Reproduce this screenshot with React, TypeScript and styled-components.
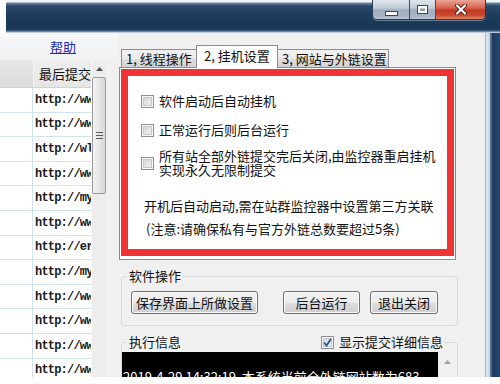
import React from "react";
import styled, { createGlobalStyle } from "styled-components";

const GlobalStyle = createGlobalStyle`
  html, body { margin: 0; padding: 0; background: #fff; }
  body { font-family: "Noto Sans CJK SC", "Noto Sans", sans-serif; color: #111; }
`;

const Screen = styled.div`
  width: 500px;
  height: 384px;
  overflow: hidden;
  background: #fff;
  display: flex;
  flex-direction: column;
`;

const TitleBar = styled.div`
  height: 33px;
  flex: none;
  display: flex;
  justify-content: flex-end;
  align-items: flex-start;
  padding-right: 14px;
  background:
    linear-gradient(90deg, #fff 0 6px, transparent 6px),
    linear-gradient(180deg, #f2f4f7 0 2px, #6c87a3 3px, #2b4969 6px, #1d3b5c 16px, #1a3657 29px, #3b5a7a 31px, #9fb4c9 32px, #dbe4ee 33px);
`;

const CaptionButtons = styled.div`
  display: flex;
  height: 19px;
  border: 1px solid #2a3a50;
  border-top: none;
  border-radius: 0 0 5px 5px;
  overflow: hidden;
  box-shadow: 0 1px 0 rgba(255, 255, 255, 0.35);
`;

const CaptionButton = styled.div<{ $w: number; $close?: boolean }>`
  width: ${(p) => p.$w}px;
  display: flex;
  align-items: center;
  justify-content: center;
  background: ${(p) =>
    p.$close
      ? "linear-gradient(#eaa597, #d86550 40%, #c23a22 55%, #c94a30 80%, #e08669)"
      : "linear-gradient(#e2e7ee, #c3ccd8 40%, #9fadbf 55%, #a6b4c6 85%, #b9c6d5)"};
  & + & {
    border-left: 1px solid #3c4d64;
  }
`;

const Body = styled.div`
  height: 344px;
  flex: none;
  display: flex;
  background: #f0f0f0;
`;

const BottomStrip = styled.div`
  flex: 1;
  background: #fff;
`;

const LeftPane = styled.div`
  width: 118px;
  flex: none;
  display: flex;
  flex-direction: column;
`;

const HelpBar = styled.div`
  height: 27px;
  flex: none;
  padding-left: 50px;
  display: flex;
  align-items: center;
  background: linear-gradient(#f7f8fa, #eff1f3);
`;

const HelpLink = styled.a`
  font-size: 13px;
  line-height: 15px;
  color: #1f2ab4;
  text-decoration: underline;
`;

const GridArea = styled.div`
  flex: 1;
  min-height: 0;
  display: flex;
`;

const Table = styled.div`
  width: 91px;
  flex: none;
  background: #fff;
  overflow: hidden;
`;

const HeaderRow = styled.div`
  height: 28px;
  box-sizing: border-box;
  display: flex;
  border-bottom: 1px solid #d2d2d2;
`;

const HeaderCell = styled.div<{ $first?: boolean }>`
  ${(p) => (p.$first ? "width: 33px; flex: none; border-right: 1px solid #f4f4f4; background: linear-gradient(#e6e6e6, #dcdcdc);" : "flex: 1; background: linear-gradient(#eeeeee, #e6e6e6);")}
  font-size: 13px;
  display: flex;
  align-items: center;
  padding-left: ${(p) => (p.$first ? 0 : 5)}px;
  white-space: nowrap;
  overflow: hidden;
`;

const Row = styled.div`
  height: 24.6px;
  box-sizing: border-box;
  display: flex;
  border-bottom: 1px solid #cfe4ee;
`;

const IndexCell = styled.div`
  width: 33px;
  flex: none;
  box-sizing: border-box;
  border-right: 1px solid #cfe4ee;
`;

const UrlCell = styled.div`
  flex: 1;
  padding-left: 2px;
  display: flex;
  align-items: center;
  font-family: "Liberation Mono", monospace;
  font-weight: bold;
  font-size: 12px;
  letter-spacing: -0.8px;
  color: #1a1a1a;
  white-space: nowrap;
  overflow: hidden;
`;

const ScrollBar = styled.div`
  width: 15px;
  flex: none;
  display: flex;
  flex-direction: column;
  align-items: stretch;
  background: #ededed;
  border-left: 1px solid #fafafa;
  box-sizing: border-box;
`;

const ScrollArrow = styled.div<{ $h: number }>`
  height: ${(p) => p.$h}px;
  flex: none;
  display: flex;
  align-items: center;
  justify-content: center;
`;

const ScrollThumb = styled.div`
  height: 115px;
  flex: none;
  border: 1px solid #9c9c9c;
  border-radius: 2px;
  background: linear-gradient(90deg, #f3f3f3, #e7e7e7 50%, #d6d6d6);
  display: flex;
  flex-direction: column;
  align-items: center;
  justify-content: center;
  gap: 2px;
`;

const Grip = styled.span`
  width: 7px;
  height: 1px;
  background: #5a5a5a;
`;

const Splitter = styled.div`
  width: 12px;
  flex: none;
  background: #f0f0f0;
`;

const RightPane = styled.div`
  width: 367px;
  flex: none;
  display: flex;
  flex-direction: column;
  padding-top: 13px;
  box-sizing: border-box;
`;

const TabStrip = styled.div`
  height: 22px;
  flex: none;
  display: flex;
  align-items: flex-end;
  padding-left: 3px;
  margin-bottom: -1px;
  position: relative;
  z-index: 1;
`;

const Tab = styled.div<{ $active?: boolean; $w: number }>`
  width: ${(p) => p.$w}px;
  height: ${(p) => (p.$active ? 23 : 19)}px;
  box-sizing: border-box;
  border: 1px solid #898c95;
  border-bottom: ${(p) => (p.$active ? "none" : "1px solid #898c95")};
  background: ${(p) => (p.$active ? "#fcfcfc" : "linear-gradient(#f2f2f2, #ebebeb 50%, #dedede 51%, #d3d3d3)")};
  font-size: 13px;
  line-height: 16px;
  display: flex;
  align-items: center;
  padding: ${(p) => (p.$active ? "0 0 3px 7px" : "0 0 0 4px")};
  white-space: pre;
  & + & {
    margin-left: -1px;
  }
`;

const TabPanel = styled.div`
  width: 337px;
  height: 193px;
  margin-left: 1px;
  flex: none;
  box-sizing: border-box;
  border: 1px solid #898c95;
  background: #fff;
  padding: 1px 1px 3px 1px;
`;

const Highlight = styled.div`
  height: 100%;
  box-sizing: border-box;
  border: 7px solid #ee3434;
  background: #fff;
  padding: 17px 0 0 13px;
  display: flex;
  flex-direction: column;
`;

const CheckRow = styled.div<{ $top: number }>`
  display: flex;
  align-items: center;
  gap: 5px;
  margin-top: ${(p) => p.$top}px;
`;

const CheckBox = styled.span<{ $checked?: boolean }>`
  width: 13px;
  height: 13px;
  flex: none;
  box-sizing: border-box;
  border: 1px solid #8e8f8f;
  background: linear-gradient(135deg, #cfd2d6, #f6f6f6);
  box-shadow: inset 0 0 0 1px #f7f7f7, inset 0 0 0 2px #c3c7cc;
  display: flex;
  align-items: center;
  justify-content: center;
`;

const CheckLabel = styled.span<{ $tight?: boolean }>`
  font-size: 13px;
  line-height: ${(p) => (p.$tight ? 14 : 16)}px;
  white-space: nowrap;
`;

const InfoLine = styled.div<{ $top: number; $indent: number }>`
  font-size: 13px;
  line-height: 16px;
  margin-top: ${(p) => p.$top}px;
  margin-left: ${(p) => p.$indent}px;
  white-space: nowrap;
`;

const GroupBox = styled.fieldset`
  margin: 9px 0 0 3px;
  width: 337px;
  box-sizing: border-box;
  border: 1px solid #d5dde3;
  border-radius: 3px;
  min-inline-size: 0;
  flex: none;
`;

const ActionGroup = styled(GroupBox)`
  padding: 8px 0 11px 5px;
`;

const LogGroup = styled(GroupBox)`
  padding: 3px 0 0 0;
`;

const Legend = styled.legend`
  font-size: 13px;
  line-height: 14px;
  padding: 0 2px;
  margin-left: 0;
`;

const WideLegend = styled(Legend)`
  margin-left: 5px;
  width: 314px;
  display: flex;
  justify-content: space-between;
  align-items: center;
`;

const LegendCheck = styled.span`
  display: flex;
  align-items: center;
  gap: 5px;
`;

const ButtonRow = styled.div`
  display: flex;
`;

const PushButton = styled.button<{ $w: number; $gap: number }>`
  width: ${(p) => p.$w}px;
  height: 23px;
  margin-left: ${(p) => p.$gap}px;
  padding: 0;
  box-sizing: border-box;
  border: 1px solid #707070;
  border-radius: 3px;
  background: linear-gradient(#f2f2f2, #ebebeb 50%, #dddddd 51%, #cfcfcf);
  box-shadow: inset 0 0 0 1px #fbfbfb;
  font-family: "Noto Sans CJK SC", "Noto Sans", sans-serif;
  font-size: 13px;
  line-height: 16px;
  color: #111;
`;

const LogRow = styled.div`
  display: flex;
  height: 40px;
`;

const LogBox = styled.div`
  flex: 1;
  background: #000;
  color: #fff;
  font-size: 13px;
  line-height: 16px;
  padding: 17px 0 0 1px;
  white-space: pre;
  overflow: hidden;
`;

const LogScroll = styled.div`
  width: 19px;
  flex: none;
  background: #f0f0f0;
  display: flex;
  justify-content: center;
  padding-top: 8px;
  box-sizing: border-box;
`;

const FrameEdge = styled.div`
  width: 15px;
  flex: none;
  background: linear-gradient(90deg, #a9b3bd 0 1px, #e1ecf7 1px, #b9d2ea 5px, #6d7f94 5px, #4b5c72 7px, #1f3c61 7px, #25466c 15px);
`;

const UpArrow = ({ color = "#4d4d4d" }: { color?: string }) => (
  <svg width="7" height="4" viewBox="0 0 7 4">
    <path d="M0 4 L3.5 0 L7 4 Z" fill={color} />
  </svg>
);

const urls = [
  "http://www.a",
  "http://www.b",
  "http://wl.c",
  "http://www.d",
  "http://my.e",
  "http://www.f",
  "http://er.g",
  "http://my.h",
  "http://www.i",
  "http://www.j",
  "http://www.k",
  "http://www.l",
];

export default function App() {
  return (
    <>
      <GlobalStyle />
      <Screen>
        <TitleBar>
          <CaptionButtons>
            <CaptionButton $w={36}>
              <svg width="13" height="6" viewBox="0 0 13 6" style={{ marginTop: 7 }}>
                <rect x="0.5" y="1.5" width="12" height="4" fill="#fff" stroke="#34465e" />
              </svg>
            </CaptionButton>
            <CaptionButton $w={25}>
              <svg width="11" height="9" viewBox="0 0 11 9">
                <rect x="0" y="0" width="11" height="9" fill="#34465e" />
                <rect x="1" y="1" width="9" height="7" fill="#fff" />
                <rect x="3" y="3.5" width="5" height="2.5" fill="#8e9db1" />
              </svg>
            </CaptionButton>
            <CaptionButton $w={49} $close>
              <svg width="12" height="11" viewBox="0 0 12 11">
                <path d="M2 1.5 L10 9.5 M10 1.5 L2 9.5" stroke="#5a1a10" strokeWidth="4" strokeLinecap="round" />
                <path d="M2 1.5 L10 9.5 M10 1.5 L2 9.5" stroke="#fff" strokeWidth="2.2" strokeLinecap="round" />
              </svg>
            </CaptionButton>
          </CaptionButtons>
        </TitleBar>
        <Body>
          <LeftPane>
            <HelpBar>
              <HelpLink>帮助</HelpLink>
            </HelpBar>
            <GridArea>
              <Table>
                <HeaderRow>
                  <HeaderCell $first />
                  <HeaderCell>最后提交时间</HeaderCell>
                </HeaderRow>
                {urls.map((u, i) => (
                  <Row key={i}>
                    <IndexCell />
                    <UrlCell>{u}</UrlCell>
                  </Row>
                ))}
              </Table>
              <ScrollBar>
                <ScrollArrow $h={17}>
                  <UpArrow />
                </ScrollArrow>
                <ScrollThumb>
                  <Grip />
                  <Grip />
                  <Grip />
                </ScrollThumb>
              </ScrollBar>
              <Splitter />
            </GridArea>
          </LeftPane>
          <RightPane>
            <TabStrip>
              <Tab $w={76}>1, 线程操作</Tab>
              <Tab $w={82} $active>2, 挂机设置</Tab>
              <Tab $w={112}>3, 网站与外链设置</Tab>
            </TabStrip>
            <TabPanel>
              <Highlight>
                <CheckRow $top={0}>
                  <CheckBox />
                  <CheckLabel>软件启动后自动挂机</CheckLabel>
                </CheckRow>
                <CheckRow $top={13}>
                  <CheckBox />
                  <CheckLabel>正常运行后则后台运行</CheckLabel>
                </CheckRow>
                <CheckRow $top={11}>
                  <CheckBox />
                  <CheckLabel $tight>
                    所有站全部外链提交完后关闭,由监控器重启挂机
                    <br />
                    实现永久无限制提交
                  </CheckLabel>
                </CheckRow>
                <InfoLine $top={21} $indent={3}>
                  开机后自动启动,需在站群监控器中设置第三方关联
                </InfoLine>
                <InfoLine $top={7} $indent={5}>
                  (注意:请确保私有与官方外链总数要超过5条)
                </InfoLine>
              </Highlight>
            </TabPanel>
            <ActionGroup>
              <Legend>软件操作</Legend>
              <ButtonRow>
                <PushButton $w={127} $gap={4}>保存界面上所做设置</PushButton>
                <PushButton $w={77} $gap={25}>后台运行</PushButton>
                <PushButton $w={68} $gap={10}>退出关闭</PushButton>
              </ButtonRow>
            </ActionGroup>
            <LogGroup>
              <WideLegend>
                <span>执行信息</span>
                <LegendCheck>
                  <CheckBox $checked>
                    <svg width="9" height="9" viewBox="0 0 9 9">
                      <path d="M1 4.5 L3.5 7.5 L8 1" stroke="#2c4f8f" strokeWidth="1.8" fill="none" />
                    </svg>
                  </CheckBox>
                  <span>显示提交详细信息</span>
                </LegendCheck>
              </WideLegend>
              <LogRow>
                <LogBox>2019-4-29 14:32:19  本系统当前全外链网站数为683</LogBox>
                <LogScroll>
                  <UpArrow color="#a0a0a0" />
                </LogScroll>
              </LogRow>
            </LogGroup>
          </RightPane>
          <FrameEdge />
        </Body>
        <BottomStrip />
      </Screen>
    </>
  );
}
